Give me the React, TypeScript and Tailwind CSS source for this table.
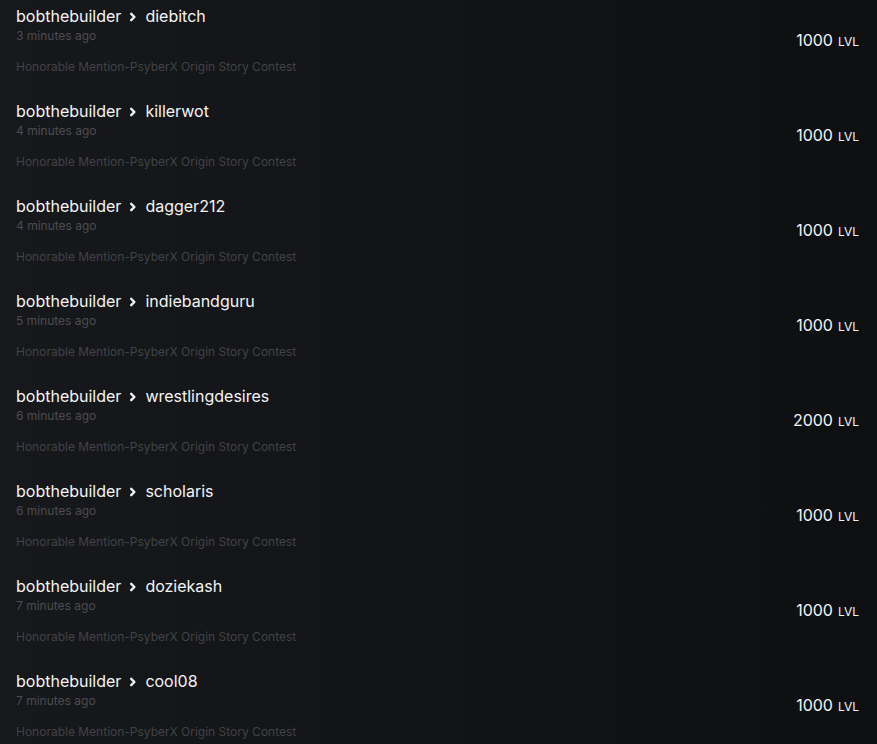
import React from "react";

const rows = [
  { to: "diebitch", time: "3 minutes ago", amount: "1000" },
  { to: "killerwot", time: "4 minutes ago", amount: "1000" },
  { to: "dagger212", time: "4 minutes ago", amount: "1000" },
  { to: "indiebandguru", time: "5 minutes ago", amount: "1000" },
  { to: "wrestlingdesires", time: "6 minutes ago", amount: "2000" },
  { to: "scholaris", time: "6 minutes ago", amount: "1000" },
  { to: "doziekash", time: "7 minutes ago", amount: "1000" },
  { to: "cool08", time: "7 minutes ago", amount: "1000" },
];

function Chevron() {
  return (
    <svg width="10" height="12" viewBox="0 0 10 12" className="ml-[7px] mr-[7px] mt-[1px]">
      <path d="M3.2 2.8 L6.4 6 L3.2 9.2" fill="none" stroke="#f2f2f2" strokeWidth="2.4" strokeLinecap="round" strokeLinejoin="round" />
    </svg>
  );
}

export default function App() {
  return (
    <div
      className="w-[877px] h-[744px] overflow-hidden bg-gradient-to-r from-[#17181b] to-[#0e0f11]"
      style={{ fontFamily: "Inter, 'Noto Sans', sans-serif" }}
    >
      {rows.map((r, i) => (
        <div key={i} className="flex h-[95px] pl-4 pr-[18px]">
          <div className="flex flex-col pt-1 flex-1">
            <div className="flex items-center h-6 text-base text-[#f4f4f5]">
              <span>bobthebuilder</span>
              <Chevron />
              <span>{r.to}</span>
            </div>
            <div className="h-4 text-xs leading-4 text-[#4b4d51]">{r.time}</div>
            <div className="mt-[15px] h-4 text-xs leading-4 text-[#414347]">
              Honorable Mention-PsyberX Origin Story Contest
            </div>
          </div>
          <div className="mt-[28px] h-6 flex items-baseline text-[#f4f4f5]">
            <span className="text-base">{r.amount}</span>
            <span className="ml-[5px] text-xs">LVL</span>
          </div>
        </div>
      ))}
    </div>
  );
}
